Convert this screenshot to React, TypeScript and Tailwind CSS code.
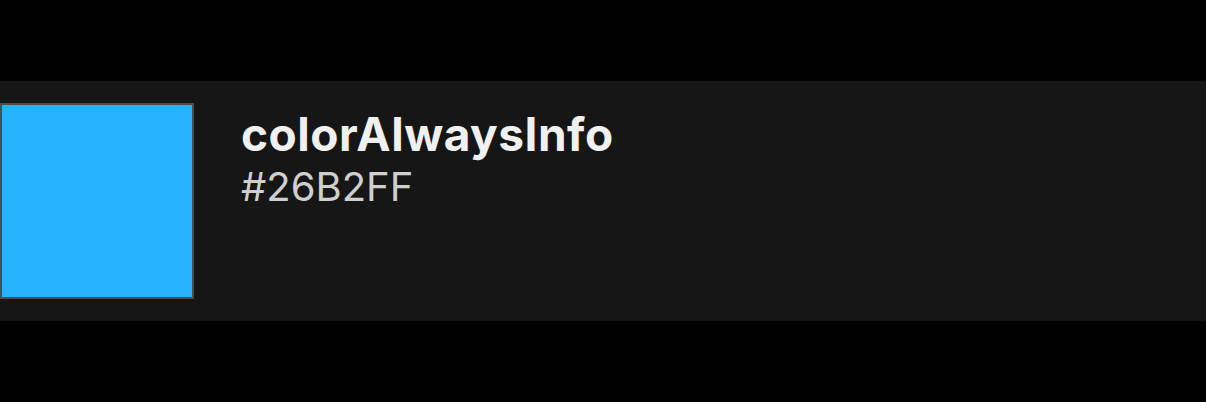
export default function App() {
  return (
    <div className="w-[1206px] h-[402px] bg-black flex flex-col justify-center font-['Inter',sans-serif]">
      <div className="h-[240px] bg-[#161616] flex items-start pt-[22px]">
        <div className="w-[194px] h-[196px] bg-[#26B2FF] border-2 border-[#4d4d4d] shrink-0" />
        <div className="ml-[47px] pt-[3px] flex flex-col">
          <div className="text-[46px] leading-[56px] font-bold text-[#f0f0f0] tracking-[0.5px]">colorAlwaysInfo</div>
          <div className="mt-[1px] text-[40px] leading-[48px] text-[#cfcfcf]">#26B2FF</div>
        </div>
      </div>
    </div>
  );
}
